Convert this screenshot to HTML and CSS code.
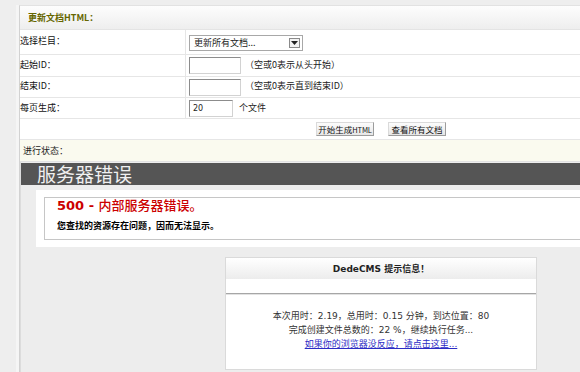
FILE: index.html
```html
<!DOCTYPE html>
<html lang="zh-CN">
<head>
<meta charset="utf-8">
<title>更新文档HTML</title>
<link rel="stylesheet" href="styles.css">
</head>
<body>
<div class="page">
  <div class="panel">
    <div class="head">更新文档HTML：</div>
    <div class="row r1">
      <div class="lab">选择栏目：</div>
      <div class="val">
        <div class="select"><span>更新所有文档...</span><span class="arrow"><svg width="7" height="4" viewBox="0 0 7 4"><path d="M0 0h7L3.5 4z" fill="#222"/></svg></span></div>
      </div>
    </div>
    <div class="row r2">
      <div class="lab">起始ID：</div>
      <div class="val"><input class="inp" type="text" value=""><span class="hint">（空或0表示从头开始）</span></div>
    </div>
    <div class="row r3">
      <div class="lab">结束ID：</div>
      <div class="val"><input class="inp" type="text" value=""><span class="hint">（空或0表示直到结束ID）</span></div>
    </div>
    <div class="row r4">
      <div class="lab">每页生成：</div>
      <div class="val"><input class="inp small" type="text" value="20"><span class="unit">个文件</span></div>
    </div>
    <div class="btnrow">
      <span class="btn">开始生成<span class="latin">HTML</span></span>
      <span class="btn">查看所有文档</span>
    </div>
    <div class="status">进行状态：</div>
    <div class="frame">
      <div class="errbar">服务器错误</div>
      <div class="errbody">
        <div class="errbox">
          <h2 class="errtitle">500 - <span class="cjk">内部服务器错误。</span></h2>
          <p class="errsub">您查找的资源存在问题，因而无法显示。</p>
        </div>
      </div>
      <div class="msgbox">
        <div class="mhead">DedeCMS 提示信息！</div>
        <div class="mspace"></div>
        <div class="mbody">
          <div>本次用时：2.19，总用时：0.15 分钟，到达位置：80</div>
          <div>完成创建文件总数的：22 %，继续执行任务...</div>
          <div><a href="#">如果你的浏览器没反应，请点击这里...</a></div>
        </div>
      </div>
    </div>
  </div>
</div>
</body>
</html>
```
FILE: styles.css
```css
html, body {
  margin: 0;
  height: 100%;
  overflow: hidden;
}
body {
  background: #eeeeee;
  font: 9px "Noto Sans CJK SC", sans-serif;
  color: #222;
}
.page {
  padding: 5px 0 0 19px;
}
.panel {
  border-left: 1px solid #d2d2d2;
  border-top: 1px solid #e2e2e2;
  background: #fff;
  box-shadow: -3px 0 0 #f5f5f5;
}
.head {
  height: 23px;
  border-bottom: 1px solid #e4e4e4;
  background: linear-gradient(#fdfdfd, #eeeeee);
  display: flex;
  align-items: center;
  padding-left: 8px;
  color: #666600;
  font-weight: bold;
}
.row {
  display: grid;
  grid-template-columns: 166px 1fr;
  border-bottom: 1px solid #e6e6e6;
}
.r1 { height: 24px; }
.r2 { height: 21px; }
.r3 { height: 20px; }
.r4 { height: 20px; }
.lab {
  box-sizing: border-box;
  border-right: 1px solid #e6e6e6;
  display: flex;
  align-items: center;
  padding-bottom: 3px;
  color: #111;
}
.r4 .lab { padding-bottom: 1px; }
.val {
  display: flex;
  align-items: center;
  padding-left: 3px;
}
.r1 .val { padding-top: 1px; }
.select {
  width: 114px;
  height: 16px;
  box-sizing: border-box;
  border: 1px solid #a8a8a8;
  display: flex;
  align-items: center;
  justify-content: space-between;
  padding: 0 2px 0 4px;
  background: #fff;
}
.arrow {
  width: 11px;
  height: 10px;
  box-sizing: border-box;
  border: 1px solid #8a8a8a;
  background: #f3f3f3;
  display: flex;
  align-items: center;
  justify-content: center;
}
.inp {
  width: 52px;
  height: 17px;
  box-sizing: border-box;
  border: 1px solid;
  border-color: #8c8c8c #d2d2d2 #d2d2d2 #8c8c8c;
  padding: 0 3px;
  margin: 0;
  font: 8px "DejaVu Sans", sans-serif;
  color: #222;
  background: #fff;
  outline: none;
}
.inp.small { width: 44px; }
.hint {
  margin-left: 4px;
  padding-bottom: 3px;
}
.unit {
  margin-left: 6px;
  padding-bottom: 2px;
}
.btnrow {
  height: 20px;
  border-bottom: 1px solid #e6e6e6;
  display: flex;
  align-items: center;
  gap: 14px;
  padding-left: 296px;
}
.btn {
  width: 58px;
  height: 14px;
  box-sizing: border-box;
  border: 1px solid;
  border-color: #dadada #9c9c9c #9c9c9c #dadada;
  background: linear-gradient(#fcfcfc, #e6e6e6);
  display: flex;
  align-items: center;
  justify-content: center;
  font-size: 8.5px;
  white-space: nowrap;
  overflow: hidden;
  color: #111;
}
.latin {
  font-size: 7.5px;
  letter-spacing: -0.2px;
}
.status {
  height: 21px;
  background: #fafaef;
  display: flex;
  align-items: center;
  padding-left: 3px;
  border-bottom: 1px solid #e2e2e2;
}
.frame {
  background: #ededed;
  border-left: 1px solid #dcdcdc;
  padding-top: 1px;
  height: 220px;
}
.errbar {
  height: 22px;
  background: #555555;
  color: #f0f0f0;
  font-size: 19px;
  line-height: 22px;
  padding-left: 16px;
}
.errbody {
  margin: 5px 0 0 15px;
  background: #fff;
  padding: 7px 0 7px 8px;
}
.errbox {
  height: 41px;
  border: 1px solid #c6c6c6;
  border-right: 0;
  padding-left: 12px;
}
.errtitle {
  margin: 0;
  font: bold 13px/16px "DejaVu Sans", "Noto Sans CJK SC", sans-serif;
  color: #cc0000;
}
.errtitle .cjk {
  font-weight: 500;
}
.errsub {
  margin: 5px 0 0;
  font-weight: bold;
  font-size: 9px;
  line-height: 13px;
  color: #000;
}
.msgbox {
  margin: 10px 0 0 204px;
  width: 312px;
  box-sizing: border-box;
  border: 1px solid #dadada;
  background: #fff;
}
.mhead {
  height: 21px;
  background: linear-gradient(#ffffff, #ececec);
  display: flex;
  align-items: center;
  justify-content: center;
  font: bold 9px "DejaVu Sans", "Noto Sans CJK SC", sans-serif;
  color: #222;
}
.mspace {
  height: 14px;
  border-bottom: 1px solid #a6a6a6;
  box-shadow: 0 1px 0 #e2e2e2;
}
.mbody {
  padding: 15px 0 18px;
  text-align: center;
  font: 9px/14px "DejaVu Sans", "Noto Sans CJK SC", sans-serif;
  color: #333;
}
.mbody a {
  color: #2b2bc4;
  text-decoration: underline;
}
```
